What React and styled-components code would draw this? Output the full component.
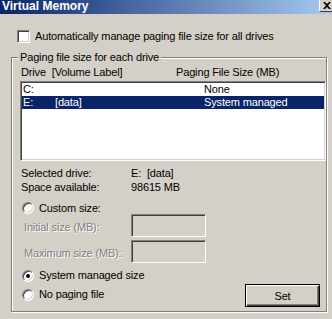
import React from "react";
import styled, { createGlobalStyle } from "styled-components";

const Global = createGlobalStyle`
  html, body { margin: 0; padding: 0; background: #d4d0c8; }
  body {
    font-family: "Liberation Sans", Arial, sans-serif;
    font-size: 11px;
    letter-spacing: -0.15px;
    color: #000;
  }
  * { box-sizing: border-box; }
`;

const Window = styled.div`
  width: 332px;
  height: 319px;
  overflow: hidden;
  background: #d4d0c8;
  display: flex;
  flex-direction: column;
`;

const TitleBar = styled.div`
  height: 14px;
  flex: none;
  display: flex;
  justify-content: space-between;
  align-items: flex-start;
  background: linear-gradient(to right, #0a246a 0%, #a6caf0 100%);
`;

const Title = styled.span`
  color: #fff;
  font-weight: bold;
  font-size: 12px;
  letter-spacing: 0;
  line-height: 13px;
  padding-left: 2px;
`;

const CloseButton = styled.div`
  width: 13px;
  height: 12px;
  background: #d4d0c8;
  border-left: 1px solid #fff;
  border-bottom: 1px solid #404040;
  display: flex;
  align-items: center;
  padding-left: 3px;
`;

const Body = styled.div`
  display: flex;
  flex-direction: column;
  padding: 16px 0 0 0;
`;

const CheckRow = styled.label`
  display: flex;
  align-items: center;
  height: 13px;
  margin-left: 17px;
  gap: 5px;
  line-height: 13px;
`;

const CheckBox = styled.span`
  width: 13px;
  height: 13px;
  flex: none;
  background: #fff;
  border-style: solid;
  border-width: 1px;
  border-color: #808080 #fff #fff #808080;
  box-shadow: inset 1px 1px 0 #404040, inset -1px -1px 0 #d4d0c8;
`;

const Group = styled.fieldset`
  margin: 8px 0 0 11px;
  width: 316px;
  height: 261px;
  padding: 2px 0 4px 8px;
  border: 1px solid #808080;
  box-shadow: inset 1px 1px 0 #fff, 1px 1px 0 #fff;
  display: flex;
  flex-direction: column;
  min-width: 0;
`;

const Legend = styled.legend`
  padding: 0 2px;
  margin-left: -2px;
  line-height: 13px;
  background: #d4d0c8;
`;

const HeaderRow = styled.div`
  display: grid;
  grid-template-columns: 155px 1fr;
  padding-left: 1px;
  height: 13px;
  line-height: 13px;
  margin-bottom: 2px;
  white-space: pre;
`;

const ListBox = styled.div`
  width: 306px;
  height: 80px;
  background: #fff;
  border-style: solid;
  border-width: 1px;
  border-color: #808080 #fff #fff #808080;
  box-shadow: inset 1px 1px 0 #404040, inset -1px -1px 0 #d4d0c8;
  padding: 1px 1px;
  display: flex;
  flex-direction: column;
`;

const ListRow = styled.div`
  display: grid;
  grid-template-columns: 32px 149px 1fr;
  padding-left: 1px;
  height: 13px;
  line-height: 13px;
  background: ${(p) => (p.$selected ? "#0a246a" : "transparent")};
  color: ${(p) => (p.$selected ? "#fff" : "#000")};
  white-space: pre;
`;

const InfoBlock = styled.div`
  margin-top: 6px;
  display: flex;
  flex-direction: column;
  gap: 1px;
`;

const InfoRow = styled.div`
  display: grid;
  grid-template-columns: 110px 1fr;
  padding-left: 1px;
  height: 13px;
  line-height: 13px;
  white-space: pre;
`;

const RadioRow = styled.label`
  display: flex;
  align-items: center;
  gap: 5px;
  margin-left: 2px;
  height: ${(p) => p.$h || 13}px;
  line-height: 13px;
  margin-top: ${(p) => p.$mt || 0}px;
`;

const Radio = styled.span`
  width: 12px;
  height: 12px;
  flex: none;
  border-radius: 50%;
  background: #fff;
  border-style: solid;
  border-width: 1px;
  border-color: #808080 #fff #fff #808080;
  box-shadow: inset 1px 1px 0 #404040, inset -1px -1px 0 #d4d0c8;
  display: flex;
  align-items: center;
  justify-content: center;

  &::after {
    content: "";
    width: 4px;
    height: 4px;
    border-radius: 50%;
    background: ${(p) => (p.$checked ? "#000" : "transparent")};
  }
`;

const SizeGrid = styled.div`
  display: grid;
  grid-template-columns: 111px 75px;
  grid-auto-rows: 23px;
  row-gap: 3px;
  margin-top: 0px;
`;

const DisabledLabel = styled.span`
  padding-left: 4px;
  line-height: 13px;
  align-self: center;
  margin-top: 3px;
  color: #808080;
  text-shadow: 1px 1px 0 #fff;
`;

const DisabledInput = styled.div`
  background: #d4d0c8;
  border-style: solid;
  border-width: 1px;
  border-color: #808080 #fff #fff #808080;
  box-shadow: inset 1px 1px 0 #404040, inset -1px -1px 0 #d4d0c8;
`;

const BottomArea = styled.div`
  display: flex;
  justify-content: space-between;
  margin-top: 6px;
  padding-right: 6px;
`;

const RadioColumn = styled.div`
  display: flex;
  flex-direction: column;
  gap: 6px;
`;

const Button = styled.button`
  width: 75px;
  height: 23px;
  margin-top: 15px;
  padding: 0;
  font-family: inherit;
  font-size: 11px;
  letter-spacing: inherit;
  color: #000;
  background: #d4d0c8;
  border: 1px solid #000;
  box-shadow: inset 1px 1px 0 #fff, inset -1px -1px 0 #404040, inset -2px -2px 0 #808080;
`;

export default function App() {
  return (
    <>
      <Global />
      <Window>
        <TitleBar>
          <Title>Virtual Memory</Title>
          <CloseButton>
            <svg width="8" height="7" viewBox="0 0 8 7">
              <path d="M0 0h2l2 2 2-2h2L5 3.5 8 7H6L4 5 2 7H0l3-3.5z" fill="#000" />
            </svg>
          </CloseButton>
        </TitleBar>
        <Body>
          <CheckRow>
            <CheckBox />
            <span>Automatically manage paging file size for all drives</span>
          </CheckRow>
          <Group>
            <Legend>Paging file size for each drive</Legend>
            <HeaderRow>
              <span>Drive  [Volume Label]</span>
              <span>Paging File Size (MB)</span>
            </HeaderRow>
            <ListBox>
              <ListRow>
                <span>C:</span>
                <span></span>
                <span>None</span>
              </ListRow>
              <ListRow $selected>
                <span>E:</span>
                <span>[data]</span>
                <span>System managed</span>
              </ListRow>
            </ListBox>
            <InfoBlock>
              <InfoRow>
                <span>Selected drive:</span>
                <span>E:  [data]</span>
              </InfoRow>
              <InfoRow>
                <span>Space available:</span>
                <span>98615 MB</span>
              </InfoRow>
            </InfoBlock>
            <RadioRow $mt={8} $h={12}>
              <Radio />
              <span>Custom size:</span>
            </RadioRow>
            <SizeGrid>
              <DisabledLabel>Initial size (MB):</DisabledLabel>
              <DisabledInput />
              <DisabledLabel>Maximum size (MB):</DisabledLabel>
              <DisabledInput />
            </SizeGrid>
            <BottomArea>
              <RadioColumn>
                <RadioRow>
                  <Radio $checked />
                  <span>System managed size</span>
                </RadioRow>
                <RadioRow>
                  <Radio />
                  <span>No paging file</span>
                </RadioRow>
              </RadioColumn>
              <Button>Set</Button>
            </BottomArea>
          </Group>
        </Body>
      </Window>
    </>
  );
}
